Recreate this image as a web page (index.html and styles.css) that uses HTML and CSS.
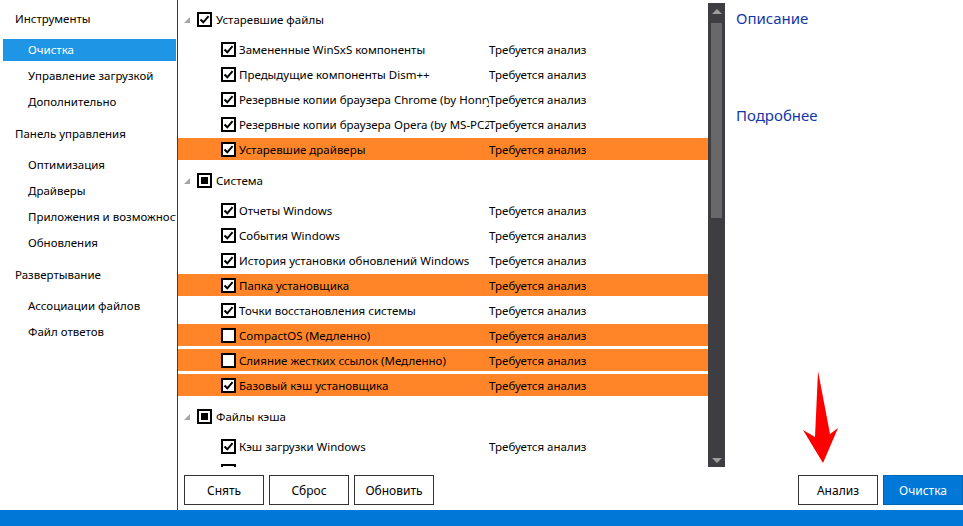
FILE: index.html
```html
<!DOCTYPE html>
<html lang="ru">
<head>
<meta charset="utf-8">
<title>Dism++ — Очистка</title>
<link rel="stylesheet" href="styles.css">
</head>
<body>
<div class="window">
  <div class="main">
    <nav class="sidebar">
      <div class="nav-section">
        <div class="nav-heading">Инструменты</div>
        <div class="nav-item selected">Очистка</div>
        <div class="nav-item">Управление загрузкой</div>
        <div class="nav-item">Дополнительно</div>
      </div>
      <div class="nav-section">
        <div class="nav-heading">Панель управления</div>
        <div class="nav-item">Оптимизация</div>
        <div class="nav-item">Драйверы</div>
        <div class="nav-item">Приложения и возможности</div>
        <div class="nav-item">Обновления</div>
      </div>
      <div class="nav-section">
        <div class="nav-heading">Развертывание</div>
        <div class="nav-item">Ассоциации файлов</div>
        <div class="nav-item">Файл ответов</div>
      </div>
    </nav>
    <div class="workspace">
      <div class="upper">
        <div class="tree">
          <div class="group">
            <span class="expander"><svg width="6" height="6" viewBox="0 0 6 6"><polygon points="6,0 6,6 0,6" fill="#a6a6a6"/></svg></span>
            <span class="cb"><svg width="11" height="11" viewBox="0 0 11 11"><path d="M1.5 5.5 L4.3 8.3 L9.6 2.2" fill="none" stroke="#000" stroke-width="2"/></svg></span>
            <span class="label">Устаревшие файлы</span>
          </div>
          <div class="row"><span class="cb"><svg width="11" height="11" viewBox="0 0 11 11"><path d="M1.5 5.5 L4.3 8.3 L9.6 2.2" fill="none" stroke="#000" stroke-width="2"/></svg></span><span class="name">Замененные WinSxS компоненты</span><span class="status">Требуется анализ</span></div>
          <div class="row"><span class="cb"><svg width="11" height="11" viewBox="0 0 11 11"><path d="M1.5 5.5 L4.3 8.3 L9.6 2.2" fill="none" stroke="#000" stroke-width="2"/></svg></span><span class="name">Предыдущие компоненты Dism++</span><span class="status">Требуется анализ</span></div>
          <div class="row"><span class="cb"><svg width="11" height="11" viewBox="0 0 11 11"><path d="M1.5 5.5 L4.3 8.3 L9.6 2.2" fill="none" stroke="#000" stroke-width="2"/></svg></span><span class="name">Резервные копии браузера Chrome (by Honry</span><span class="status">Требуется анализ</span></div>
          <div class="row"><span class="cb"><svg width="11" height="11" viewBox="0 0 11 11"><path d="M1.5 5.5 L4.3 8.3 L9.6 2.2" fill="none" stroke="#000" stroke-width="2"/></svg></span><span class="name">Резервные копии браузера Opera (by MS-PC2</span><span class="status">Требуется анализ</span></div>
          <div class="row hl"><span class="cb"><svg width="11" height="11" viewBox="0 0 11 11"><path d="M1.5 5.5 L4.3 8.3 L9.6 2.2" fill="none" stroke="#000" stroke-width="2"/></svg></span><span class="name">Устаревшие драйверы</span><span class="status">Требуется анализ</span></div>

          <div class="group">
            <span class="expander"><svg width="6" height="6" viewBox="0 0 6 6"><polygon points="6,0 6,6 0,6" fill="#a6a6a6"/></svg></span>
            <span class="cb part"><span class="fill"></span></span>
            <span class="label">Система</span>
          </div>
          <div class="row"><span class="cb"><svg width="11" height="11" viewBox="0 0 11 11"><path d="M1.5 5.5 L4.3 8.3 L9.6 2.2" fill="none" stroke="#000" stroke-width="2"/></svg></span><span class="name">Отчеты Windows</span><span class="status">Требуется анализ</span></div>
          <div class="row"><span class="cb"><svg width="11" height="11" viewBox="0 0 11 11"><path d="M1.5 5.5 L4.3 8.3 L9.6 2.2" fill="none" stroke="#000" stroke-width="2"/></svg></span><span class="name">События Windows</span><span class="status">Требуется анализ</span></div>
          <div class="row"><span class="cb"><svg width="11" height="11" viewBox="0 0 11 11"><path d="M1.5 5.5 L4.3 8.3 L9.6 2.2" fill="none" stroke="#000" stroke-width="2"/></svg></span><span class="name">История установки обновлений Windows</span><span class="status">Требуется анализ</span></div>
          <div class="row hl"><span class="cb"><svg width="11" height="11" viewBox="0 0 11 11"><path d="M1.5 5.5 L4.3 8.3 L9.6 2.2" fill="none" stroke="#000" stroke-width="2"/></svg></span><span class="name">Папка установщика</span><span class="status">Требуется анализ</span></div>
          <div class="row"><span class="cb"><svg width="11" height="11" viewBox="0 0 11 11"><path d="M1.5 5.5 L4.3 8.3 L9.6 2.2" fill="none" stroke="#000" stroke-width="2"/></svg></span><span class="name">Точки восстановления системы</span><span class="status">Требуется анализ</span></div>
          <div class="row hl"><span class="cb"></span><span class="name">CompactOS (Медленно)</span><span class="status">Требуется анализ</span></div>
          <div class="row hl"><span class="cb"></span><span class="name">Слияние жестких ссылок (Медленно)</span><span class="status">Требуется анализ</span></div>
          <div class="row hl"><span class="cb"><svg width="11" height="11" viewBox="0 0 11 11"><path d="M1.5 5.5 L4.3 8.3 L9.6 2.2" fill="none" stroke="#000" stroke-width="2"/></svg></span><span class="name">Базовый кэш установщика</span><span class="status">Требуется анализ</span></div>

          <div class="group">
            <span class="expander"><svg width="6" height="6" viewBox="0 0 6 6"><polygon points="6,0 6,6 0,6" fill="#a6a6a6"/></svg></span>
            <span class="cb part"><span class="fill"></span></span>
            <span class="label">Файлы кэша</span>
          </div>
          <div class="row"><span class="cb"><svg width="11" height="11" viewBox="0 0 11 11"><path d="M1.5 5.5 L4.3 8.3 L9.6 2.2" fill="none" stroke="#000" stroke-width="2"/></svg></span><span class="name">Кэш загрузки Windows</span><span class="status">Требуется анализ</span></div>
          <div class="row last"><span class="cb"><svg width="11" height="11" viewBox="0 0 11 11"><path d="M1.5 5.5 L4.3 8.3 L9.6 2.2" fill="none" stroke="#000" stroke-width="2"/></svg></span><span class="name">Кэш оптимизации доставки</span><span class="status">Требуется анализ</span></div>
        </div>
        <div class="scrollbar">
          <div class="sb-btn"><span class="arrow-up"></span></div>
          <div class="sb-thumb"></div>
          <div class="sb-track"></div>
          <div class="sb-btn"><span class="arrow-down"></span></div>
        </div>
        <div class="details">
          <div class="details-title">Описание</div>
          <div class="details-more">Подробнее</div>
        </div>
      </div>
      <div class="toolbar">
        <button class="btn">Снять</button>
        <button class="btn">Сброс</button>
        <button class="btn">Обновить</button>
        <div class="spacer"></div>
        <button class="btn">Анализ</button>
        <button class="btn primary">Очистка</button>
      </div>
    </div>
  </div>
  <div class="statusbar"></div>
  <svg class="red-arrow" width="42" height="98" viewBox="0 0 42 98"><polygon points="18,3 30,66 38,60 23,95 3,62 15,69" fill="#ff0000"/></svg>
</div>
</body>
</html>
```

FILE: styles.css
```css
html, body {
  margin: 0;
  padding: 0;
  background: #fff;
}

body {
  font-family: "Noto Sans", "Open Sans", sans-serif;
  font-size: 11.5px;
  color: #000;
}

.window {
  position: relative;
  width: 963px;
  height: 526px;
  display: flex;
  flex-direction: column;
  overflow: hidden;
}

.main {
  display: flex;
  height: 510px;
}

/* Sidebar */
.sidebar {
  width: 177px;
  flex: none;
  border-right: 1px solid #3a3a3a;
  padding-top: 8px;
  overflow: hidden;
}

.nav-section {
  margin-bottom: 10px;
}

.nav-heading {
  height: 22px;
  line-height: 22px;
  padding-left: 15px;
  margin-bottom: 9px;
  white-space: nowrap;
}

.nav-item {
  height: 22px;
  line-height: 22px;
  margin: 0 1px 4px 3px;
  padding-left: 25px;
  white-space: nowrap;
  overflow: hidden;
}

.nav-item:last-child {
  margin-bottom: 0;
}

.nav-item.selected {
  background: #1f95e6;
  color: #fff;
}

/* Workspace */
.workspace {
  flex: 1;
  min-width: 0;
  display: flex;
  flex-direction: column;
}

.upper {
  display: flex;
  height: 467px;
}

.tree {
  width: 530px;
  flex: none;
  overflow: hidden;
  padding-top: 2px;
  box-sizing: border-box;
}

.group {
  height: 33px;
  padding: 2px 0 0 6px;
  box-sizing: border-box;
  display: flex;
  align-items: center;
  margin-bottom: 3px;
}

.expander {
  width: 6px;
  height: 6px;
  margin-right: 7px;
  display: flex;
}

.group .cb {
  margin-right: 4px;
}

.row {
  height: 22px;
  margin-bottom: 3px;
  padding-left: 43px;
  display: flex;
  align-items: center;
  white-space: nowrap;
}

.row.last {
  align-items: flex-start;
  padding-top: 4px;
  box-sizing: border-box;
}

.row.last .name,
.row.last .status {
  padding-top: 3px;
}

.row.hl {
  background: #ff8528;
}

.cb {
  width: 15px;
  height: 15px;
  flex: none;
  box-sizing: border-box;
  border: 2px solid #000;
  background: #fff;
  display: flex;
  align-items: center;
  justify-content: center;
}

.row .cb {
  margin-right: 3px;
}

.cb .fill {
  width: 7px;
  height: 7px;
  background: #000;
}

.name {
  width: 250px;
  flex: none;
  overflow: hidden;
  white-space: nowrap;
}

.status {
  white-space: nowrap;
}

/* Scrollbar */
.scrollbar {
  width: 17px;
  flex: none;
  margin-top: 3px;
  height: 464px;
  background: #3e3e42;
  display: flex;
  flex-direction: column;
}

.sb-btn {
  height: 17px;
  display: flex;
  align-items: center;
  justify-content: center;
  flex: none;
}

.arrow-up {
  width: 0;
  height: 0;
  border-left: 5px solid transparent;
  border-right: 5px solid transparent;
  border-bottom: 5px solid #9e9e9e;
}

.arrow-down {
  width: 0;
  height: 0;
  border-left: 5px solid transparent;
  border-right: 5px solid transparent;
  border-top: 5px solid #9e9e9e;
  margin-top: 3px;
}

.sb-thumb {
  margin: 3px 0 0 3px;
  width: 11px;
  height: 195px;
  background: #686868;
  flex: none;
}

.sb-track {
  flex: 1;
}

/* Details */
.details {
  flex: 1;
  padding: 8px 0 0 11px;
  font-size: 15px;
  line-height: 20px;
  color: #1238a8;
}

.details-more {
  margin-top: 77px;
}

/* Toolbar */
.toolbar {
  display: flex;
  gap: 5px;
  padding: 8px 0 5px 6px;
}

.spacer {
  flex: 1;
}

.btn {
  width: 80px;
  height: 30px;
  box-sizing: border-box;
  border: 1px solid #333;
  background: #fff;
  color: #000;
  font-family: inherit;
  font-size: 12px;
  padding: 0;
  margin: 0;
}

.btn.primary {
  background: #0078d7;
  border-color: #0067b8;
  color: #fff;
}

.statusbar {
  height: 16px;
  background: #0078d7;
}

.red-arrow {
  position: absolute;
  left: 800px;
  top: 368px;
}
```
